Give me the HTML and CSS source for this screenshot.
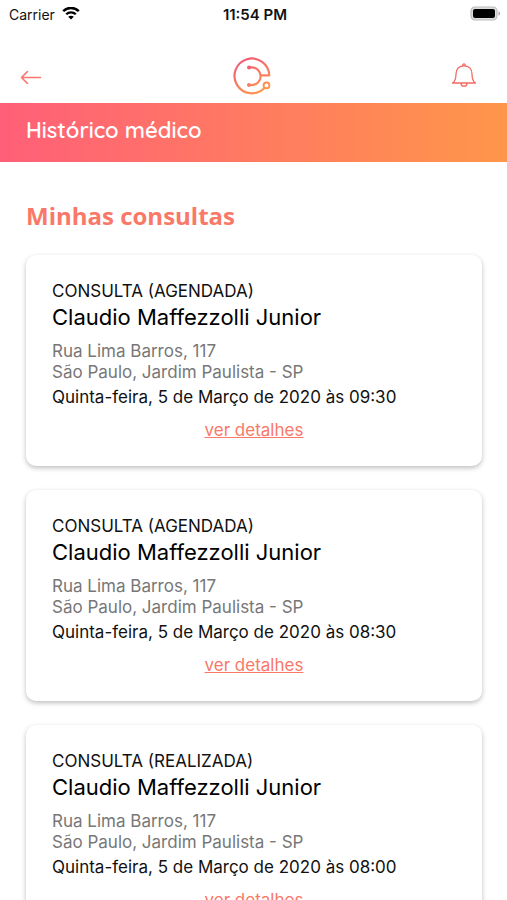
FILE: index.html
```html
<!DOCTYPE html>
<html lang="pt-BR">
<head>
<meta charset="utf-8">
<meta name="viewport" content="width=device-width, initial-scale=1">
<title>Histórico médico</title>
<link rel="stylesheet" href="styles.css">
</head>
<body>
<div class="app">
  <div class="status">
    <div class="status-left">
      <span>Carrier</span>
      <svg class="wifi" viewBox="0 0 18 14" aria-hidden="true">
        <path d="M1.2 4.2C5.6-.2 12.4-.2 16.8 4.2" fill="none" stroke="#000" stroke-width="2.5"/>
        <path d="M4.200 7.300c2.700-2.700 6.900-2.700 9.600 0" fill="none" stroke="#000" stroke-width="2.300"/>
        <path d="M6.200 9.800c1.600-1.500 4-1.500 5.600 0L9 12.600z" fill="#000"/>
      </svg>
    </div>
    <span class="clock">11:54 PM</span>
    <div class="status-right">
      <svg class="battery" viewBox="0 0 31 16" aria-hidden="true">
        <rect x="1" y="1" width="26" height="13" rx="4" fill="#ddd" stroke="#bbb" stroke-width="1.2"/>
        <rect x="3" y="3" width="22" height="9" rx="2" fill="#000"/>
        <path d="M28.5 5.3v4.400c1-.4 1.700-1.200 1.700-2.200s-.7-1.800-1.700-2.200z" fill="#aaa"/>
      </svg>
    </div>
  </div>
  <header class="topbar">
    <button class="icon-button" type="button" aria-label="Voltar">
      <svg class="back" viewBox="0 0 22 16" fill="none" stroke="#f9756d" stroke-width="1.6" stroke-linecap="round" stroke-linejoin="round">
        <path d="M20.5 9.5H1.5M7.500 3.500L1.500 9.500l6 6"/>
      </svg>
    </button>
    <svg class="logo" viewBox="0 0 40 40" role="img" aria-label="Logo" fill="none" stroke-width="2.2" stroke-linecap="round" stroke-linejoin="round">
      <defs>
        <linearGradient id="brand" gradientUnits="userSpaceOnUse" x1="10" y1="2" x2="28" y2="38">
          <stop offset="0" stop-color="#ef5878"/>
          <stop offset="1" stop-color="#ff9a4d"/>
        </linearGradient>
      </defs>
      <g stroke="url(#brand)">
        <path d="M32.400 32A17.400 17.400 0 1 1 37.300 19.400H28.800"/>
        <path d="M17 11.400h2.500a9.200 8.800 0 0 1 0 17.600H17"/>
        <circle cx="34.500" cy="29.400" r="2.900" stroke-width="1.900" fill="#fff"/>
      </g>
      <circle cx="17" cy="11.400" r="2" fill="#f0606f"/>
      <circle cx="17" cy="29" r="2" fill="#fb7c62"/>
    </svg>
    <button class="icon-button" type="button" aria-label="Notificações">
      <svg class="bell" viewBox="0 0 26 26" fill="none" stroke="#f26a63" stroke-width="1.3" stroke-linecap="round" stroke-linejoin="round">
        <path d="M1.5 20c2.8-1.800 3.500-4.500 3.500-9 0-5 3.200-8.200 8-8.200s8 3.200 8 8.200c0 4.500.7 7.200 3.500 9z"/>
        <path d="M11.800 2.700V2.100a1.200 1.200 0 0 1 2.400 0v.6M10 20.200a3 3 0 0 0 6 0"/>
      </svg>
    </button>
  </header>
  <div class="banner"><h1>Histórico médico</h1></div>
  <main class="content">
    <h2>Minhas consultas</h2>
    <article class="card">
      <p class="kind">CONSULTA (AGENDADA)</p>
      <h3>Claudio Maffezzolli Junior</h3>
      <p class="address">Rua Lima Barros, 117<br>São Paulo, Jardim Paulista - SP</p>
      <p class="date">Quinta-feira, 5 de Março de 2020 às 09:30</p>
      <a class="details" href="#">ver detalhes</a>
    </article>
    <article class="card">
      <p class="kind">CONSULTA (AGENDADA)</p>
      <h3>Claudio Maffezzolli Junior</h3>
      <p class="address">Rua Lima Barros, 117<br>São Paulo, Jardim Paulista - SP</p>
      <p class="date">Quinta-feira, 5 de Março de 2020 às 08:30</p>
      <a class="details" href="#">ver detalhes</a>
    </article>
    <article class="card">
      <p class="kind">CONSULTA (REALIZADA)</p>
      <h3>Claudio Maffezzolli Junior</h3>
      <p class="address">Rua Lima Barros, 117<br>São Paulo, Jardim Paulista - SP</p>
      <p class="date">Quinta-feira, 5 de Março de 2020 às 08:00</p>
      <a class="details" href="#">ver detalhes</a>
    </article>
  </main>
</div>
</body>
</html>
```

FILE: styles.css
```css
* {
  box-sizing: border-box;
}

body,
h1,
h2,
h3,
p {
  margin: 0;
}

body {
  background: #fff;
  color: #111;
  font-family: Inter, "Liberation Sans", sans-serif;
  font-size: 17px;
  line-height: 21px;
}

svg {
  display: block;
}

.app {
  display: flex;
  flex-direction: column;
  height: 100vh;
}

.status {
  display: grid;
  grid-template-columns: 1fr auto 1fr;
  align-items: center;
  flex: none;
  height: 28px;
  padding: 0 6px 0 9px;
  font-size: 14px;
}

.status-left {
  display: flex;
  align-items: center;
  gap: 7px;
}

.status-right {
  display: flex;
  justify-content: flex-end;
}

.clock {
  font-size: 15px;
  font-weight: 600;
}

.wifi {
  width: 18px;
  height: 14px;
}

.battery {
  width: 31px;
  height: 16px;
}

.topbar {
  display: grid;
  grid-template-columns: 1fr auto 1fr;
  align-items: center;
  flex: none;
  height: 75px;
  padding: 20px 24px 0 20px;
}

.icon-button {
  justify-self: start;
  padding: 0;
  border: 0;
  background: none;
  cursor: pointer;
}

.icon-button:last-child {
  justify-self: end;
  padding-right: 6px;
}

.back {
  width: 22px;
  height: 16px;
}

.logo {
  width: 40px;
  height: 40px;
}

.bell {
  width: 26px;
  height: 26px;
}

.banner {
  flex: none;
  padding: 12px 26px 17px;
  background: linear-gradient(90deg, #ff5f78, #ff964a);
  color: #fff;
}

.banner h1 {
  font-family: Quicksand, Lato, sans-serif;
  font-size: 22px;
  font-weight: 600;
  line-height: 30px;
}

.content {
  display: flex;
  flex: 1;
  flex-direction: column;
  gap: 24px;
  min-height: 0;
  padding: 38px 25px 24px 26px;
  overflow-y: auto;
  scrollbar-width: none;
}

.content h2 {
  color: #f97868;
  font-family: "Open Sans", "Noto Sans", sans-serif;
  font-size: 24px;
  font-weight: 700;
  line-height: 31px;
}

.card {
  display: flex;
  flex: none;
  flex-direction: column;
  padding: 26px 26px 25px;
  border-radius: 10px;
  background: #fff;
  box-shadow: 0 2px 5px rgba(0, 0, 0, 0.26);
}

.kind {
  line-height: 20px;
}

.card h3 {
  margin-bottom: 8px;
  color: #000;
  font-size: 22px;
  font-weight: 400;
  line-height: 32px;
}

.address {
  margin-bottom: 4px;
  color: #777;
}

.date {
  margin-bottom: 12px;
}

.details {
  align-self: center;
  color: #f97868;
}
```
